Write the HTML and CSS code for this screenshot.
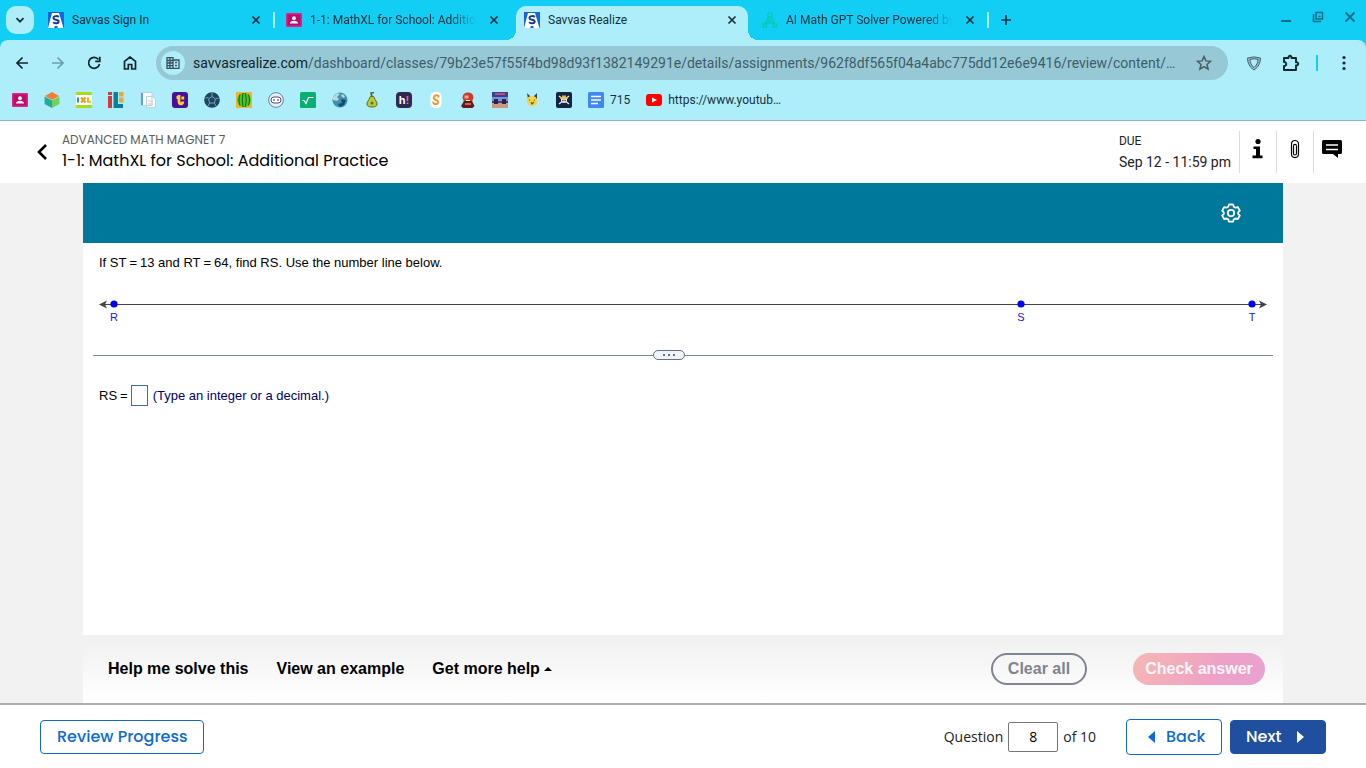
FILE: index.html
```html
<!DOCTYPE html>
<html lang="en">
<head>
<meta charset="utf-8">
<meta name="viewport" content="width=device-width, initial-scale=1">
<title>Savvas Realize</title>
<link rel="stylesheet" href="styles.css">
</head>
<body>
<svg class="defs" width="0" height="0" aria-hidden="true">
  <symbol id="savvas" viewBox="0 0 16 16"><path fill="#1763e0" d="M0 0h16v16H0z"/><path fill="#fff" d="M4 1h7l4.500 15H9.500V14H7l-1 2H0z"/><path d="M10.800 4.900C9.500 3.700 5.500 3.700 5.500 5.900c0 2.300 5.200 1.300 5.200 3.600 0 2.200-4 2.300-5.500.6" fill="none" stroke="#123c9c" stroke-width="2"/></symbol>
  <symbol id="classroom" viewBox="0 0 16 16"><rect y="1" width="16" height="14" rx="1" fill="#e91e8c"/><rect x="1.500" y="2.500" width="13" height="11" fill="#b80f6c"/><circle cx="8" cy="6.200" r="1.900" fill="#fff"/><path d="M4 11.500c0-3.600 8-3.600 8 0z" fill="#fff"/></symbol>
  <symbol id="close" viewBox="0 0 10 10"><path d="M1.500 1.500l7 7m0-7l-7 7" fill="none" stroke="currentColor" stroke-width="1.700"/></symbol>
</svg>

<header class="browser">
  <div class="tabstrip">
    <button class="tab-search" aria-label="Search tabs"><svg width="10" height="10" viewBox="0 0 10 10"><path d="M1.500 3.200L5 6.700l3.500-3.500" fill="none" stroke="currentColor" stroke-width="1.800"/></svg></button>
    <div class="tab"><svg class="icon"><use href="#savvas"/></svg><span class="tab-title">Savvas Sign In</span><button class="tab-close" aria-label="Close tab"><svg><use href="#close"/></svg></button></div>
    <div class="tab plain"><svg class="icon"><use href="#classroom"/></svg><span class="tab-title fade">1-1: MathXL for School: Additio</span><button class="tab-close" aria-label="Close tab"><svg><use href="#close"/></svg></button></div>
    <div class="tab active"><svg class="icon"><use href="#savvas"/></svg><span class="tab-title">Savvas Realize</span><button class="tab-close" aria-label="Close tab"><svg><use href="#close"/></svg></button></div>
    <div class="tab"><svg class="icon" viewBox="0 0 16 16" fill="none" stroke="#08c9b4" stroke-width="1.300"><circle cx="8" cy="3" r="2.200"/><path d="M6.500 4.500L3 12m6.500-7.500L13 12M5 11l3-4 3 4zM1 12h3.500v3H1zM11.500 12H15v3h-3.500z"/></svg><span class="tab-title fade">AI Math GPT Solver Powered by</span><button class="tab-close" aria-label="Close tab"><svg><use href="#close"/></svg></button></div>
    <button class="new-tab" aria-label="New tab"><svg width="12" height="12" viewBox="0 0 12 12"><path d="M6 1v10M1 6h10" stroke="currentColor" stroke-width="1.600"/></svg></button>
    <div class="window-controls">
      <button aria-label="Minimize"><svg viewBox="0 0 12 12"><path d="M1 10h10" stroke="currentColor" stroke-width="2"/></svg></button>
      <button aria-label="Restore"><svg viewBox="0 0 12 12" fill="none" stroke="currentColor" stroke-width="1.500"><path d="M4 1.500h6.500V8H4zM1.500 3v7.500H9M6.500 5.500h2"/></svg></button>
      <button aria-label="Close window"><svg viewBox="0 0 12 12"><path d="M1.500 1.500l9 9m0-9l-9 9" stroke="currentColor" stroke-width="1.800"/></svg></button>
    </div>
  </div>

  <div class="toolbar">
    <div class="nav">
      <button aria-label="Back"><svg viewBox="0 0 14 14"><path d="M13 7H2m5.500-5.500L2 7l5.500 5.500"/></svg></button>
      <button aria-label="Forward" disabled><svg viewBox="0 0 14 14"><path d="M1 7h11M6.500 1.500L12 7l-5.500 5.500"/></svg></button>
      <button aria-label="Reload"><svg viewBox="0 0 14 14"><path d="M11.500 3.500A5.500 5.500 0 1 0 12.500 8M12.800.8v4.500H8.200"/></svg></button>
      <button aria-label="Home"><svg viewBox="0 0 14 14"><path d="M1.500 5.300L7 1l5.500 4.300V13H8.700V8.500H5.300V13H1.500z"/></svg></button>
    </div>
    <div class="omnibox">
      <button class="site-info" aria-label="Site information"><svg width="14" height="12" viewBox="0 0 14 12" fill="none" stroke="#3d4f58" stroke-width="1.300"><path d="M1 .7h6v10.600H1zM7 3h6v8.300H7M1 3.500h6M1 6h6M1 8.600h6M4 .7v10.600M9 5.500h2M9 8.500h2"/></svg></button>
      <div class="url" role="textbox" aria-label="Address bar" contenteditable="true" spellcheck="false"><span class="host">savvasrealize.com</span>/dashboard/classes/79b23e57f55f4bd98d93f1382149291e/details/assignments/962f8df565f04a4abc775dd12e6e9416/review/content/…</div>
      <button class="bookmark-star" aria-label="Bookmark this page"><svg width="16" height="16" viewBox="0 0 16 16"><path d="M8 1.500l1.900 4.400 4.700.4L11 9.500l1.100 4.700L8 11.700l-4.100 2.500L5 9.500 1.400 6.300l4.700-.4z" fill="none" stroke="#4d5963" stroke-width="1.500"/></svg></button>
    </div>
    <button class="tool" aria-label="Shield"><svg width="16" height="16" viewBox="0 0 16 16"><path d="M1.500 3Q8 .8 14.500 3c0 5-2 9-6.500 12-4.500-3-6.500-7-6.500-12zM4 4.500q4-1.500 8 0c0 3-1.500 6-4 8-2.500-2-4-5-4-8z" fill="#8fb6c6" stroke="#4a6272" fill-rule="evenodd"/></svg></button>
    <button class="tool extensions" aria-label="Extensions"><svg width="18" height="18" viewBox="0 0 18 18"><path d="M2 4h4.500c-.3-3 3.300-3 3 0H14v4.200c3-.3 3 3.600 0 3.300V16H2v-4c3 .3 3-4.300 0-4z" fill="none" stroke="#16262d" stroke-width="1.900" stroke-linejoin="round"/></svg></button>
    <span class="toolbar-divider"></span>
    <button class="tool menu" aria-label="Menu"><svg width="4" height="16" viewBox="0 0 4 16" fill="#16262d"><circle cx="2" cy="2.500" r="1.600"/><circle cx="2" cy="8" r="1.600"/><circle cx="2" cy="13.500" r="1.600"/></svg></button>
  </div>

  <nav class="bookmarks" aria-label="Bookmarks">
    <a href="#" aria-label="Classroom"><svg class="icon"><use href="#classroom"/></svg></a>
    <a href="#" aria-label="Cube"><svg class="icon" viewBox="0 0 16 16"><path fill="#f47c36" d="M8 0l7 4-7 4-7-4z"/><path fill="#1fae94" d="M.6 4.500L8 8.500V16L.6 12z"/><path fill="#6fd35a" d="M15.400 4.500L8 8.500V16l7.400-4z"/></svg></a>
    <a href="#" aria-label="Practice"><svg class="icon" viewBox="0 0 16 16"><path fill="#fff" d="M0 0h16v16H0z"/><path fill="#a6dc20" d="M0 0h16v3H0zm0 13h16v3H0z"/><path d="M2 5.500v5" stroke="#159dd2" stroke-width="2"/><path d="M5 5.500l4.500 5m0-5l-4.500 5" stroke="#f49a12" stroke-width="2"/><path d="M12 5.500v4.300h3" stroke="#f4b51c" fill="none" stroke-width="2"/></svg></a>
    <a href="#" aria-label="Learning"><svg class="icon" viewBox="0 0 16 16"><path fill="#d43b35" d="M0 0h4v3H0zm0 4h4v12H0z"/><path fill="#087f9b" d="M5.500 0h4.500v12h5v4H5.500z"/><path fill="#e8a63b" d="M11 0h4.500v4.500H11zm0 5.500h4.500v5H11z"/></svg></a>
    <a href="#" aria-label="Documents"><svg class="icon" viewBox="0 0 16 16"><path fill="#f8fafb" stroke="#c4d0d5" d="M1 .5h11v13H1zM6.500 4.500h6l3 3v8h-9z"/><path fill="#58a6cf" d="M1 1h2v12H1z"/><path stroke="#c4d0d5" d="M8 9h5m-5 3h5"/></svg></a>
    <a href="#" aria-label="Typing"><svg class="icon" viewBox="0 0 16 16"><rect width="16" height="16" rx="3" fill="#4810a0"/><path d="M7 3v6.500c0 3 3.800 3 3.800 0M4.500 5.500H7M10.800 4.500v3" fill="none" stroke="#ffd21c" stroke-width="2.800"/></svg></a>
    <a href="#" aria-label="Globe"><svg class="icon" viewBox="0 0 16 16"><circle cx="8" cy="8" r="7.800" fill="#1d465e"/><path d="M8 4.500l3.500 2.500-1.200 4H5.700L4.500 7zM8 1v3.500M1.500 6l3-.5m10 .5l-3 1M5.700 11L4 14m6.300-3l1.700 3" fill="none" stroke="#6fa5c2"/></svg></a>
    <a href="#" aria-label="Watermelon"><svg class="icon" viewBox="0 0 16 16"><path fill="#f3b52c" d="M0 0h16v16H0z"/><circle cx="8" cy="8" r="7" fill="#4fc526"/><path d="M7 1q-1.500 7 0 14M9.500 1q1.500 7 0 14M4 2.500q-2 5.500 0 11m8.500-11q2 5.500 0 11" stroke="#126e19" stroke-width="1.100" fill="none"/></svg></a>
    <a href="#" aria-label="Robot"><svg class="icon" viewBox="0 0 16 16" fill="none" stroke="#727ea5"><circle cx="8" cy="8" r="7.400" fill="#e5f0fa"/><rect x="3" y="5" width="10" height="6" rx="3" fill="#fff" stroke="#514e76"/><path d="M5.500 8h1m3 0h1" stroke="#38345c" stroke-width="2"/></svg></a>
    <a href="#" aria-label="Math"><svg class="icon" viewBox="0 0 16 16"><rect width="16" height="16" rx="1.500" fill="#0aae70"/><path d="M2.500 8.500H4l2 3 2.500-6h5" fill="none" stroke="#fff" stroke-width="1.200"/></svg></a>
    <a href="#" aria-label="Earth"><svg class="icon" viewBox="0 0 16 16"><circle cx="8" cy="8" r="7.500" fill="#3f90ad"/><path fill="#b8d9d6" d="M1 5l4-4 3 1-3 3 2 2-2 2-4-1zm9-3l3 2-1 2-3-2z"/><path fill="#16496c" d="M9 7l5 1-2 5-4 2-2-3 4-1z"/></svg></a>
    <a href="#" aria-label="Pear"><svg class="icon" viewBox="0 0 16 16"><path d="M8 4c3 0 2 3 4 5 3 5-1 6-4 6s-7-1-4-6c2-2 1-5 4-5z" fill="#b9cc38" stroke="#586a23"/><path d="M8 5L7 1l3-.5" fill="none" stroke="#52602a" stroke-width="1.500"/><circle cx="8" cy="11" r="1.500" fill="#617223"/></svg></a>
    <a href="#" aria-label="Hiragana"><span class="letter-icon">h<b>!</b></span></a>
    <a href="#" aria-label="Scratch"><svg class="icon" viewBox="0 0 16 16"><rect x="2.500" width="11" height="16" rx="4.500" fill="#fff"/><path d="M10.500 5.500V4q-2-1.500-4 0-1.500 2 0 3.200l3 1.600q1.500 2-.5 3.200H6.500q-1.500-.5-1.200-2.500" fill="none" stroke="#f39726" stroke-width="1.900"/></svg></a>
    <a href="#" aria-label="Red game"><svg class="icon" viewBox="0 0 16 16"><path fill="#c93d29" d="M8 .5q5 0 5.500 5L12 10H4L2.500 5.500Q3 .5 8 .5z"/><path fill="#f7a483" d="M4.500 3.500h4v3h-4z"/><path fill="#5e1b20" d="M4 9h8l2.500 5-2 2H3l-2-2z"/><path fill="#e9573c" d="M5 11h6v2H5z"/><path fill="#fff" d="M6 8h4v1H6z"/></svg></a>
    <a href="#" aria-label="Arcade"><svg class="icon" viewBox="0 0 16 16"><path fill="#3d3d91" d="M0 0h16v16H0z"/><path fill="#c99a80" d="M0 11h16v5H0z"/><path fill="#7396e3" d="M0 5h16v4H0z"/><path d="M3 2h10" stroke="#e45b58" stroke-width="1.500"/><path fill="#33223e" d="M2 7h4v5H2zm8 0h4v5h-4z"/></svg></a>
    <a href="#" aria-label="Yellow character"><svg class="icon" viewBox="0 0 16 16"><path fill="#34474c" d="M3 1l4 4-3 2zm10 0L9 5l4 3z"/><circle cx="8" cy="9" r="5.300" fill="#f2d550"/><path d="M5.500 7.500v1m5-1v1M7 10l1 2 2-2" fill="none" stroke="#765b25" stroke-width="1.200"/></svg></a>
    <a href="#" aria-label="Pirate"><svg class="icon" viewBox="0 0 16 16"><rect width="16" height="16" rx="2" fill="#132342"/><path d="M3 4l10 8M13 4L3 12" stroke="#e3e8e6" stroke-width="1.400"/><circle cx="8" cy="8" r="3" fill="#f7f4e8"/><path d="M4 6h8M6 4.300h4" stroke="#e5b73e" stroke-width="1.500"/><path d="M6.300 8.500h1.200m1 0h1.200" stroke="#132342" stroke-width="1.500"/></svg></a>
    <a href="#"><svg class="icon" viewBox="0 0 16 16"><rect width="16" height="16" rx="1.500" fill="#4285f4"/><path d="M3 4.500h10M3 8h10M3 11.500h7" stroke="#fff" stroke-width="1.600"/></svg><span>715</span></a>
    <a href="#"><svg class="icon" viewBox="0 0 16 16"><rect y="2" width="16" height="12" rx="3" fill="#f00"/><path fill="#fff" d="M6 5.500l5 2.500-5 2.500z"/></svg><span>https://www.youtub…</span></a>
  </nav>
</header>

<header class="assignment">
  <button class="go-back" aria-label="Go back"><svg width="12" height="18" viewBox="0 0 12 18"><path d="M10 2L3 9l7 7" fill="none" stroke="#000" stroke-width="2.600"/></svg></button>
  <div class="headings"><p class="course">ADVANCED MATH MAGNET 7</p><h1>1-1: MathXL for School: Additional Practice</h1></div>
  <div class="due"><p class="due-label">DUE</p><p class="due-date">Sep 12 - 11:59 pm</p></div>
  <div class="actions">
    <button aria-label="Information"><svg width="12" height="22" viewBox="0 0 12 22"><circle cx="6" cy="3.500" r="2.600"/><path d="M1.500 8.500H8v9h2.500v2.800h-10v-2.800H4V11H1.500z"/></svg></button>
    <button aria-label="Attachments"><svg width="10" height="20" viewBox="0 0 10 20"><path d="M6.500 7v7.500c0 2-3 2-3 0V6.800c0-2 3-2 3 0M1.500 7v8c0 4.700 7 4.700 7 0V5c0-4.700-7-4.700-7 0v5" fill="none" stroke="#000" stroke-width="1.200"/></svg></button>
    <button aria-label="Comments"><svg width="20" height="20" viewBox="0 0 20 20"><path d="M1.500 1h17q1.500 0 1.500 1.500v11q0 1.500-1.500 1.500H16v4l-5-4H1.500Q0 15 0 13.500v-11Q0 1 1.500 1z"/><path d="M4 6h12M4 10.500h12" stroke="#fff" stroke-width="1.500"/></svg></button>
  </div>
</header>

<main class="workspace">
  <div class="player">
    <div class="player-bar"><button aria-label="Settings"><svg width="20" height="20" viewBox="0 0 20 20" fill="none" stroke="#fff" stroke-width="1.800" stroke-linejoin="round"><path d="M8 1.500h4l.8 2.300 1.600.9 2.500-.5 1.900 3.400L17.200 9.300v1.600l1.600 1.700-1.900 3.400-2.500-.5-1.600.9-.8 2.300H8l-.8-2.300-1.600-.9-2.500.5-1.900-3.400 1.600-1.700V9.300L1.200 7.600l1.900-3.400 2.500.5 1.600-.9z"/><circle cx="10" cy="10.100" r="3.200"/></svg></button></div>
    <section class="question">
      <p class="prompt">If ST<span class="eq">=</span>13 and RT<span class="eq">=</span>64, find RS. Use the number line below.</p>
      <svg class="number-line" viewBox="0 0 1168 36" role="img" aria-label="Number line with points R, S and T">
        <path d="M2 12.500h1164" stroke="#444"/>
        <path d="M0 12.500l8-4-2 4 2 4zM1168 12.500l-8-4 2 4-2 4z" fill="#444"/>
        <g fill="#00f"><circle cx="15" cy="12" r="3.600"/><circle cx="922" cy="12" r="3.600"/><circle cx="1153" cy="12" r="3.600"/></g>
        <g class="point-labels"><text x="15" y="29">R</text><text x="922" y="29">S</text><text x="1153" y="29">T</text></g>
      </svg>
      <div class="splitter"><button aria-label="Resize answer area"><i></i><i></i><i></i></button></div>
      <div class="answer"><label for="rs">RS<span>=</span></label><input id="rs" type="text"><span class="hint">(Type an integer or a decimal.)</span></div>
    </section>
    <div class="help-bar">
      <button class="help">Help me solve this</button>
      <button class="help">View an example</button>
      <button class="help">Get more help <svg width="8" height="4" viewBox="0 0 8 4"><path d="M0 4l4-4 4 4z"/></svg></button>
      <button class="pill clear" disabled>Clear all</button>
      <button class="pill check" disabled>Check answer</button>
    </div>
  </div>
</main>

<footer class="pager">
  <button class="btn">Review Progress</button>
  <div class="position"><label for="number">Question</label><input id="number" type="text" value="8"><span>of 10</span></div>
  <button class="btn back"><svg width="7" height="12" viewBox="0 0 7 12"><path fill="currentColor" d="M7 0v12L0 6z"/></svg>Back</button>
  <button class="btn next">Next<svg width="7" height="12" viewBox="0 0 7 12"><path fill="currentColor" d="M0 0v12l7-6z"/></svg></button>
</footer>
</body>
</html>
```
FILE: styles.css
```css
* { box-sizing: border-box; }
body { margin: 0; min-height: 100vh; display: flex; flex-direction: column; background: #fff; color: #000; font: 13px "Liberation Sans", Arial, sans-serif; }
button { margin: 0; padding: 0; border: 0; background: none; color: inherit; font: inherit; display: flex; align-items: center; justify-content: center; flex: none; }
p, h1 { margin: 0; }
svg { display: block; flex: none; }
.defs { position: absolute; }
.icon { width: 16px; height: 16px; }

/* Browser window */
.browser { background: #12cdf4; color: #14323c; font: 12px/16px Roboto, sans-serif; border-bottom: 1px solid #8fb8c4; }
.tabstrip { height: 40px; display: flex; padding: 6px 10px 0 6px; }
.tab-search { width: 28px; height: 28px; border-radius: 10px; background: #aeeefb; margin-right: 4px; }
.tab { position: relative; flex: 0 1 238px; min-width: 0; display: flex; align-items: center; padding: 0 13px 6px 10px; }
.tab::after { content: ""; position: absolute; right: 1px; top: 6px; width: 2px; height: 16px; background: #aeeefb; }
.tab.plain::after, .tab.active::after { display: none; }
.tab-title { flex: 1; min-width: 0; margin: 0 11px 0 8px; overflow: hidden; white-space: nowrap; }
.fade { mask-image: linear-gradient(90deg, #000 85%, transparent); }
.tab-close { width: 14px; height: 16px; }
.tab-close svg { width: 10px; height: 10px; }
.tab.active { background: #aeeefb; border-radius: 10px 10px 0 0; flex-basis: 232px; margin: 0 4px 0 2px; padding-left: 8px; padding-right: 9px; }
.active::before { content: ""; position: absolute; bottom: 0; left: -10px; right: -10px; height: 10px; background: radial-gradient(circle at 0 0, transparent 10px, #aeeefb 10px) left / 10px 10px no-repeat, radial-gradient(circle at 100% 0, transparent 10px, #aeeefb 10px) right / 10px 10px no-repeat; }
.new-tab { width: 32px; height: 28px; }
.window-controls { margin-left: auto; display: flex; gap: 20px; height: 22px; color: #0d6e85; }
.window-controls svg { width: 12px; height: 12px; }
.toolbar { height: 46px; background: #aeeefb; border-radius: 8px 8px 0 0; display: flex; align-items: center; padding: 0 16px 0 14px; }
.nav { display: flex; gap: 20px; margin-right: 18px; }
.nav button { width: 16px; height: 16px; color: #14242b; }
.nav svg { width: 14px; height: 14px; fill: none; stroke: currentColor; stroke-width: 1.700; }
.nav button:disabled { color: #6e9dab; }
.omnibox { flex: 1; min-width: 0; height: 34px; border-radius: 17px; background: #96c8d5; display: flex; align-items: center; padding: 0 16px 0 5px; font-size: 14px; }
.site-info { width: 24px; height: 24px; border-radius: 50%; background: #aeeefb; }
.url { flex: 1; min-width: 0; margin: 0 12px 0 8px; color: #3f5e69; white-space: nowrap; overflow: hidden; text-overflow: ellipsis; outline: 0; }
.host { color: #10252d; }
.tool { margin-left: 18px; }
.tool.extensions { margin-left: 20px; }
.toolbar-divider { width: 2px; height: 16px; background: #12cdf4; margin: 0 24px 0 16px; }
.tool.menu { margin: 0 4px 0 0; }
.bookmarks { height: 34px; background: #aeeefb; display: flex; align-items: center; gap: 16px; padding: 0 12px 6px; }
.bookmarks a { display: flex; align-items: center; gap: 6px; color: inherit; text-decoration: none; }
.letter-icon { width: 16px; height: 16px; border-radius: 4px; background: #2c2a50; color: #fff; font: bold 11px/16px "Liberation Sans", sans-serif; text-align: center; }
.letter-icon b { color: #f062b2; }

/* Assignment header */
.assignment { display: flex; align-items: center; padding: 0 16px 0 34px; height: 62px; font-family: Poppins, Inter, sans-serif; }
.go-back { width: 16px; height: 20px; margin-right: 12px; }
.headings { flex: 1; min-width: 0; }
.course { font-size: 12px; line-height: 18px; color: #5c5c5c; }
.assignment h1 { font-size: 16px; line-height: 24px; font-weight: 400; }
.due { font-family: Roboto, sans-serif; color: #222; margin-right: 8px; }
.due-label { font-size: 12px; line-height: 20px; }
.due-date { font-size: 14px; line-height: 22px; }
.actions { display: flex; }
.actions button { width: 37px; height: 42px; padding-bottom: 6px; border-left: 1px solid #dcdcdc; }

/* Exercise */
.workspace { flex: 1; background: #f2f2f2; display: flex; justify-content: center; padding: 0 16px; }
.player { flex: 1; max-width: 1200px; min-width: 0; display: flex; flex-direction: column; background: #fff; }
.player-bar { height: 60px; background: #00789c; display: flex; align-items: center; justify-content: flex-end; padding-right: 42px; }
.question { flex: 1; padding: 12px 10px 20px; }
.prompt { padding: 0 6px; line-height: 16px; }
.eq { margin: 0 3px; }
.number-line { width: calc(100% - 12px); margin: 21px 6px 0; height: auto; }
.point-labels { fill: #2020dd; font-size: 11px; text-anchor: middle; }
.splitter { display: flex; align-items: center; margin-top: 22px; }
.splitter::before, .splitter::after { content: ""; flex: 1; height: 1px; background: #7f8c8d; }
.splitter::before { flex: 0 0 560px; }
.splitter button { width: 32px; height: 10px; border: 1px solid #66727c; border-radius: 5px; background: #eef4f9; gap: 3px; }
.splitter i { width: 2px; height: 2px; background: #66727c; }
.answer { display: flex; align-items: center; padding: 0 6px; margin-top: 25px; }
.answer label { display: flex; gap: 3px; }
.answer input { width: 17px; height: 21px; padding: 0; border: 1px solid #3d6ca5; background: #fff; margin: 0 5px 0 3px; font: inherit; text-align: center; }
.hint { color: #000066; }
.help-bar { display: flex; align-items: center; min-height: 68px; padding: 0 18px 0 25px; background: linear-gradient(#f0f0f0, #fff); font-size: 16px; font-weight: bold; }
.help { margin-right: 28px; gap: 4px; }
.pill { height: 32px; border-radius: 16px; }
.clear { margin-left: auto; width: 96px; border: 2px solid #7f8490; color: #7f8490; }
.check { margin-left: 46px; width: 132px; color: #fff7fa; background: linear-gradient(115deg, #f6b8b3, #efa1c5 60%, #e8a1d1); }

/* Question navigation */
.pager { display: flex; align-items: center; padding: 0 40px; height: 65px; border-top: 2px solid #adadad; }
.btn { height: 34px; padding: 0 16px; border: 1px solid #0e6ad0; border-radius: 4px; color: #0e6ad0; background: #fff; font: 500 16px/24px Poppins, Inter, sans-serif; }
.position { display: flex; align-items: center; margin-left: auto; margin-right: 30px; gap: 5px; color: #222; font: 14px/20px "Open Sans", sans-serif; }
.position input { width: 50px; height: 30px; border: 1px solid #767676; border-radius: 2px; font: inherit; text-align: center; padding: 0; }
.back { width: 96px; height: 36px; gap: 11px; margin-right: 8px; padding: 0 0 0 21px; justify-content: flex-start; }
.next { width: 96px; gap: 16px; padding: 0 0 0 15px; justify-content: flex-start; background: #204fa0; border-color: #204fa0; color: #fff; }
```
